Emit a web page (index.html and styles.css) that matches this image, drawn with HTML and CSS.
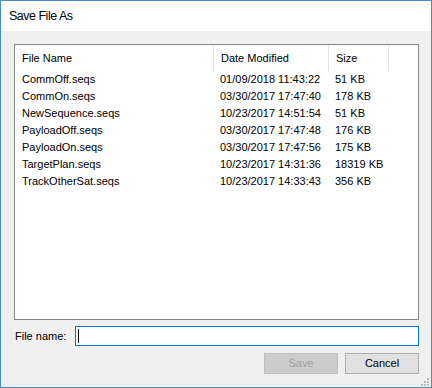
FILE: index.html
```html
<!DOCTYPE html>
<html>
<head>
<meta charset="utf-8">
<link rel="stylesheet" href="styles.css">
</head>
<body>
<div class="window">
  <div class="titlebar">Save File As</div>
  <div class="content">
    <div class="list">
      <div class="row header">
        <div class="c1">File Name</div>
        <div class="c2">Date Modified</div>
        <div class="c3">Size</div>
        <div class="c4"></div>
      </div>
      <div class="row"><div class="c1">CommOff.seqs</div><div class="c2">01/09/2018 11:43:22</div><div class="c3">51 KB</div></div>
      <div class="row"><div class="c1">CommOn.seqs</div><div class="c2">03/30/2017 17:47:40</div><div class="c3">178 KB</div></div>
      <div class="row"><div class="c1">NewSequence.seqs</div><div class="c2">10/23/2017 14:51:54</div><div class="c3">51 KB</div></div>
      <div class="row"><div class="c1">PayloadOff.seqs</div><div class="c2">03/30/2017 17:47:48</div><div class="c3">176 KB</div></div>
      <div class="row"><div class="c1">PayloadOn.seqs</div><div class="c2">03/30/2017 17:47:56</div><div class="c3">175 KB</div></div>
      <div class="row"><div class="c1">TargetPlan.seqs</div><div class="c2">10/23/2017 14:31:36</div><div class="c3">18319 KB</div></div>
      <div class="row"><div class="c1">TrackOtherSat.seqs</div><div class="c2">10/23/2017 14:33:43</div><div class="c3">356 KB</div></div>
    </div>
    <div class="filerow">
      <label class="label">File name:</label>
      <div class="input"><span class="caret"></span></div>
    </div>
    <div class="buttons">
      <div class="btn disabled">Save</div>
      <div class="btn">Cancel</div>
    </div>
  </div>
  <svg class="grip" width="8" height="8" viewBox="0 0 8 8">
    <rect x="6" y="0" width="2" height="2" fill="#b9b9b9"/>
    <rect x="3" y="3" width="2" height="2" fill="#b9b9b9"/>
    <rect x="6" y="3" width="2" height="2" fill="#b9b9b9"/>
    <rect x="0" y="6" width="2" height="2" fill="#b9b9b9"/>
    <rect x="3" y="6" width="2" height="2" fill="#b9b9b9"/>
    <rect x="6" y="6" width="2" height="2" fill="#b9b9b9"/>
  </svg>
</div>
</body>
</html>
```
FILE: styles.css
```css
html, body {
  margin: 0;
  padding: 0;
  background: #ffffff;
}
body {
  font-family: "Liberation Sans", Arial, sans-serif;
  font-size: 11px;
  color: #000;
}
.window {
  position: relative;
  width: 432px;
  height: 388px;
  box-sizing: border-box;
  border: 1px solid #4a8ccb;
  display: flex;
  flex-direction: column;
  background: #f0f0f0;
}
.titlebar {
  height: 30px;
  flex: none;
  background: #ffffff;
  font-size: 12.5px;
  letter-spacing: -0.5px;
  line-height: 30px;
  padding-left: 8px;
}
.content {
  flex: 1;
  display: flex;
  flex-direction: column;
  padding: 13px 12px 0 13px;
}
.list {
  height: 276px;
  box-sizing: border-box;
  border: 1px solid #828790;
  background: #ffffff;
  flex: none;
}
.row {
  display: flex;
  height: 17px;
  line-height: 17px;
  white-space: nowrap;
}
.row.header {
  height: 26px;
  line-height: 26px;
}
.c1 { width: 198px; padding-left: 7px; box-sizing: border-box; }
.c2 { width: 115px; padding-left: 7px; box-sizing: border-box; }
.c3 { width: 60px; padding-left: 7px; box-sizing: border-box; }
.header .c1 { border-right: 1px solid #e5e5e5; width: 199px; }
.header .c2 { border-right: 1px solid #e5e5e5; }
.header .c3 { border-right: 1px solid #e5e5e5; }
.header .c4 { flex: 1; }
.filerow {
  display: flex;
  align-items: center;
  margin-top: 6px;
  height: 20px;
}
.label {
  width: 60px;
  padding-left: 1px;
  flex: none;
}
.input {
  flex: 1;
  height: 20px;
  box-sizing: border-box;
  border: 1px solid #0078d7;
  background: #fff;
  position: relative;
}
.caret {
  position: absolute;
  left: 2px;
  top: 2px;
  width: 1px;
  height: 14px;
  background: #000;
}
.buttons {
  display: flex;
  justify-content: flex-end;
  gap: 7px;
  margin-top: 7px;
}
.btn {
  width: 74px;
  height: 21px;
  box-sizing: border-box;
  border: 1px solid #adadad;
  background: #e1e1e1;
  text-align: center;
  line-height: 19px;
}
.btn.disabled {
  background: #cccccc;
  border-color: #bfbfbf;
  color: #a0a0a0;
}
.grip {
  position: absolute;
  right: 2px;
  bottom: 1px;
}
```
